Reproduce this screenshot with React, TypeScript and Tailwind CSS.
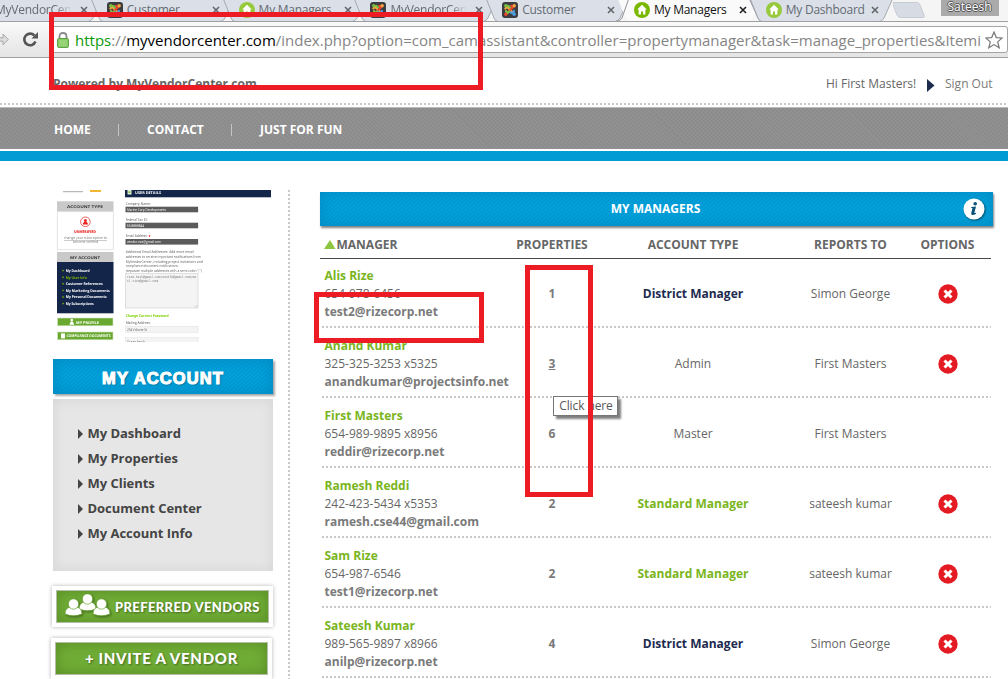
import React from "react";

function Joomla() {
  return (
    <svg width="16" height="16" viewBox="0 0 16 16" className="shrink-0">
      <rect width="16" height="16" rx="3" fill="#3b3d40" />
      <g fill="none" strokeWidth="2.2" strokeLinecap="round">
        <path d="M3.4 6.5 L5 4.8 L11 10.8" stroke="#f9a440" />
        <path d="M6.2 3.8 L8.2 5.6" stroke="#7ac143" />
        <path d="M9.2 3.8 L11.2 5 L5.2 11" stroke="#e8452f" />
        <path d="M4 9 L5 11.2 L7.5 9.4" stroke="#7ac143" />
        <path d="M8.6 10.4 L11 11.4 L12 9" stroke="#4a9be0" />
      </g>
      <circle cx="3.8" cy="3.8" r="1.7" fill="#7ac143" />
      <circle cx="12.2" cy="3.8" r="1.7" fill="#f9a440" />
      <circle cx="3.8" cy="12.2" r="1.7" fill="#e8452f" />
      <circle cx="12.2" cy="12.2" r="1.7" fill="#4a9be0" />
    </svg>
  );
}

function House({ color }: { color: string }) {
  return (
    <svg width="16" height="16" viewBox="0 0 16 16" className="shrink-0">
      <circle cx="8" cy="8" r="8" fill={color} />
      <path d="M8 2.8 L3.2 7.6 L4.6 7.6 L4.6 12.4 L7 12.4 L7 9.4 L9 9.4 L9 12.4 L11.4 12.4 L11.4 7.6 L12.8 7.6 Z" fill="#fff" />
    </svg>
  );
}

function CloseX({ color }: { color: string }) {
  return (
    <svg width="8" height="8" viewBox="0 0 8 8" className="shrink-0">
      <path d="M1 1 L7 7 M7 1 L1 7" stroke={color} strokeWidth="1.6" />
    </svg>
  );
}

type TabInfo = { title: string; icon: "joomla" | "house"; active?: boolean; fade?: boolean };

const tabs: TabInfo[] = [
  { title: "MyVendorCente", icon: "joomla", fade: true },
  { title: "Customer", icon: "joomla" },
  { title: "My Managers", icon: "house" },
  { title: "MyVendorCente", icon: "joomla", fade: true },
  { title: "Customer", icon: "joomla" },
  { title: "My Managers", icon: "house", active: true },
  { title: "My Dashboard", icon: "house" },
];

function Tab({ tab }: { tab: TabInfo }) {
  return (
    <div className="relative h-[22px] w-[131.8px] shrink-0">
      <svg className="absolute left-[-8px] top-0" width="148" height="22" viewBox="0 0 148 22">
        <path
          d="M2 -2 L10 18 Q11.5 21.5 14 21.5 L131 21.5 Q134 21.5 136 18 L145 -2 Z"
          fill={tab.active ? "#fafafa" : "#dbe0e8"}
          stroke={tab.active ? "#fafafa" : "#a3a8af"}
        />
        {tab.active && <path d="M-1 21.5 Q4 21.5 6 18 L13 -2 M133 -2 L142 18 Q143 21.5 147 21.5" fill="none" stroke="#8d9299" />}
      </svg>
      <div className="relative flex h-[20px] items-center pl-[10px]">
        {tab.icon === "joomla" ? <Joomla /> : <House color={tab.active ? "#7ab800" : "#97c93d"} />}
        <span className={`ml-1 w-[83px] overflow-hidden whitespace-nowrap text-[12px] leading-[20px] ${tab.active ? "tracking-[-0.25px] text-[#111]" : "tracking-[-0.25px] text-[#646b73]"}`}>
          <span className={tab.fade ? "block w-[80px] overflow-hidden [mask-image:linear-gradient(to_right,#000_75%,transparent_96%)]" : ""}>{tab.title}</span>
        </span>
        <span className="ml-[2px] flex"><CloseX color={tab.active ? "#222" : "#61666c"} /></span>
      </div>
    </div>
  );
}

function Browser() {
  return (
    <div>
      <div className="flex h-[22px] overflow-hidden border-b border-[#a0a0a0] bg-[#f5f5f6]">
        <div className="-ml-[35px] flex shrink-0">{tabs.map((t, i) => <Tab key={i} tab={t} />)}</div>
        <svg width="36" height="22" viewBox="0 0 36 22" className="ml-[5px] shrink-0">
          <path d="M-1 2.5 L24 2.5 Q26 2.5 27 5 L31 15 Q32 17.5 30 17.5 L8 17.5 Q5 17.5 4 15 L0 5 Q-1 2.5 1 2.5" fill="#d7dce4" stroke="#c7ccd4" />
        </svg>
        <div className="ml-[12px] h-[16px] w-[58px] shrink-0 bg-[#aaa] text-center text-[12px] leading-[13px] text-white [text-shadow:1px_0_#555,-1px_0_#555,0_1px_#555,0_-1px_#555]">Sateesh</div>
      </div>
      <div className="flex h-[36px] items-center border-b border-[#a0a0a0] bg-linear-to-b from-[#fafafa] to-[#e4e4e4]">
        <svg width="51" height="35" viewBox="0 0 51 35" className="shrink-0">
          <path d="M0 15.8 L3 15.8 L3 12.2 L8.3 17.5 L3 22.8 L3 19.2 L0 19.2" fill="#ddd" stroke="#a8a8a8" />
          <path d="M35.5 19.6 A5.8 5.8 0 1 1 34.4 13.5" fill="none" stroke="#555" strokeWidth="2.6" />
          <path d="M38 10 L38 16.5 L31.5 16.5 Z" fill="#555" />
        </svg>
        <div className="flex h-[27px] w-[957px] shrink-0 items-center rounded-[3px] border border-[#a5a5a5] bg-white pl-[5px]">
          <svg width="12" height="16" viewBox="0 0 12 16" className="shrink-0">
            <path d="M2.5 8 L2.5 4.5 Q2.5 1 6 1 Q9.5 1 9.5 4.5 L9.5 8" fill="none" stroke="#8a8a8a" strokeWidth="1.8" />
            <rect x=".6" y="6.6" width="10.8" height="8.8" rx="1" fill="#8ccf6c" stroke="#579b3b" />
            <path d="M2 9 H10 M2 11 H10 M2 13 H10" stroke="#a9df8e" strokeWidth=".7" />
          </svg>
          <div className="ml-[6px] w-[906px] overflow-hidden whitespace-nowrap text-[15px] leading-[24px] text-[#858585]">
            <span className="text-[#0b9a0b]">https</span>://<span className="text-black">myvendorcenter.com</span>/index.php?option=com_camassistant&amp;controller=propertymanager&amp;task=manage_properties&amp;Itemid
          </div>
          <svg width="18" height="18" viewBox="0 0 18 18" className="ml-[4px] shrink-0">
            <path d="M9 1 L11.3 6.6 L17.2 7 L12.7 10.9 L14.2 16.8 L9 13.6 L3.8 16.8 L5.3 10.9 L.8 7 L6.7 6.6 Z" fill="#fff" stroke="#777" strokeWidth="1.2" />
          </svg>
        </div>
      </div>
    </div>
  );
}

function SiteHeader() {
  return (
    <div>
      <div className="flex h-[45px] items-center pl-[53px] pt-[7px] text-[12px]">
        <span className="w-[773px] font-bold text-[#666]">Powered by MyVendorCenter.com</span>
        <span className="w-[101px] whitespace-nowrap text-[#666]">Hi First Masters!</span>
        <svg width="8" height="13" viewBox="0 0 8 13" className="mt-[2px]"><path d="M0 0 L7.5 6.5 L0 13 Z" fill="#1d2b4f" /></svg>
        <span className="ml-[10px] whitespace-nowrap text-[#7b7b7b]">Sign Out</span>
      </div>
      <div className="h-[2px] bg-[repeating-linear-gradient(90deg,#c9c9c9_0_2px,#fff_2px_4px)]" />
      <div className="h-[2px]" />
      <div className="flex h-[42px] items-center border-t border-[#b9b9b9] bg-[#8b8b8b] bg-[repeating-linear-gradient(45deg,rgba(255,255,255,0.06)_0_1.4px,transparent_1.4px_2.8px)] pl-[54px] pt-[2px] text-[12px] font-bold text-white">
        <span className="w-[64px] whitespace-nowrap">HOME</span>
        <span className="h-[12px] w-px bg-[#c5c5c5]" />
        <span className="ml-[28px] w-[84px] whitespace-nowrap">CONTACT</span>
        <span className="h-[12px] w-px bg-[#c5c5c5]" />
        <span className="ml-[28px] whitespace-nowrap">JUST FOR FUN</span>
      </div>
      <div className="mt-[2px] h-[10px] bg-[#039bd3]" />
    </div>
  );
}

const thumbMenu: [string, number][] = [
  ["My Dashboard", 24], ["My User Info", 21], ["Customer References", 37],
  ["My Marketing Documents", 44], ["My Personal Documents", 41], ["My Subscriptions", 28],
];
const thumbNotes: [string, number, number][] = [
  ["Additional Email Addresses: Add more email", 63.3, 68], ["addresses to receive important notifications from", 68, 75],
  ["MyVendorCenter, including project invitations and", 72.6, 77], ["compliance document notifications.", 77.3, 53],
  ['(separate multiple addresses with a semi-colon ";")', 82.3, 76],
];
const thumbFields: [string, string, number, number, number][] = [
  ["Company Name:", "Marine Corp Developments", 16.7, 25, 39],
  ["Federal Tax ID:", "65-8888844", 32.7, 22, 17],
  ["Email Address:", "vendor.rize@gmail.com", 49, 22, 34],
];

function Label(props: React.SVGProps<SVGTextElement>) {
  return <text lengthAdjust="spacingAndGlyphs" {...props} />;
}

function Thumbnail() {
  return (
    <svg width="220" height="152" viewBox="0 0 220 152" className="block overflow-hidden [filter:blur(0.25px)]" fontFamily="Open Sans, sans-serif" fontSize="3.8" textRendering="geometricPrecision">
      <rect x="10" y="1.2" width="20" height="1" fill="#aaa" />
      <rect x="37" y="0" width="11" height="2" fill="#f2b632" />
      <rect x="4" y="11.3" width="56.5" height="10.4" fill="#c9c9c9" />
      <rect x="4.3" y="21.7" width="56" height="38" fill="#fff" stroke="#ddd" strokeWidth=".8" />
      <Label x="14" y="18.2" fontWeight="700" fill="#333" textLength="36">ACCOUNT TYPE</Label>
      <circle cx="32.4" cy="31.8" r="4.8" fill="#fff" stroke="#f03a3a" strokeWidth=".8" />
      <circle cx="32.4" cy="30.4" r="1.5" fill="#e22" />
      <path d="M29.8 34.6 Q30 31.8 32.4 31.8 Q34.8 31.8 35 34.6 Z" fill="#e22" />
      <Label x="21" y="42.7" fontWeight="800" fill="#f03030" textLength="22">UNVERIFIED</Label>
      <Label x="11" y="49.3" fill="#777" textLength="43" textDecoration="underline">change your subscription to</Label>
      <Label x="20" y="53.3" fill="#777" textLength="25">become verified</Label>
      <rect x="4" y="62" width="56.5" height="10" fill="#c9c9c9" />
      <Label x="17" y="68.8" fontWeight="700" fill="#333" textLength="30">MY ACCOUNT</Label>
      <rect x="4" y="72" width="56.5" height="51.3" fill="#14254a" />
      {thumbMenu.map(([t, w], i) => (
        <g key={t} fontWeight="700">
          <path d={`M9.5 ${79.4 + i * 6.6} l1.8 1.2 l-1.8 1.2 z`} fill="#7ab800" />
          <Label x="12.7" y={82 + i * 6.6} fill={i === 1 ? "#7ab800" : "#fff"} textLength={w}>{t}</Label>
        </g>
      ))}
      <rect x="4.5" y="128" width="55.5" height="7.8" fill="#6aa92f" stroke="#d5e5c5" strokeWidth=".6" />
      <circle cx="18.8" cy="130" r="1.3" fill="#fff" />
      <path d="M16.6 134.8 Q17 131.3 18.8 131.3 Q20.6 131.3 21 134.8 Z" fill="#fff" />
      <Label x="23" y="133.5" fontWeight="700" fill="#fff" textLength="23">MY PROFILE</Label>
      <rect x="4.5" y="142" width="55.5" height="7.8" fill="#6aa92f" stroke="#d5e5c5" strokeWidth=".6" />
      <rect x="8" y="143.4" width="4" height="5" fill="#fff" />
      <Label x="13.5" y="147.3" fontWeight="700" fill="#fff" textLength="44">COMPLIANCE DOCUMENTS</Label>
      <rect x="72" y="0" width="146" height="7.3" fill="#14254a" />
      <rect x="74.5" y="0" width="4" height="4.5" fill="#e8f2dc" />
      <rect x="75.3" y="1.5" width="2.4" height="1.2" fill="#6aa92f" />
      <Label x="82" y="3.8" fontWeight="700" fill="#fff" textLength="26">USER DETAILS</Label>
      {thumbFields.map(([l, v, y, lw, vw]) => (
        <g key={l}>
          <Label x="72.7" y={y - 1.9} fill="#555" textLength={lw}>{l}</Label>
          <rect x="72.5" y={y} width="72.6" height="5.6" fill="#5b5b5b" />
          <Label x="74" y={y + 4.2} fill="#fff" textLength={vw}>{v}</Label>
        </g>
      ))}
      <Label x="95.5" y="48" fill="red" fontWeight="700">*</Label>
      {thumbNotes.map(([t, y, w]) => <Label key={t} x="72.7" y={y} fill="#606060" textLength={w}>{t}</Label>)}
      <rect x="72.5" y="83.6" width="72.5" height="34.4" fill="#f4f4f4" stroke="#ccc" strokeWidth=".6" />
      <g fontFamily="Liberation Mono, monospace" fill="#777" fontSize="3.6">
        <Label x="74" y="87.6" textLength="69">rize.test@gmail.com;mint70@gmail.com;ma</Label>
        <Label x="74" y="91.6" textLength="31">il.rize@gmail.com</Label>
      </g>
      <path d="M142 117.5 L144.5 115" stroke="#999" strokeWidth=".5" />
      <Label x="72.7" y="126.8" fontWeight="700" fill="#7fd000" textLength="43">Change Current Password</Label>
      <Label x="72.7" y="134.4" fill="#555" textLength="25">Mailing Address:</Label>
      <rect x="72.5" y="136.2" width="72.5" height="6" fill="#f4f4f4" stroke="#ddd" strokeWidth=".5" />
      <Label x="74" y="140.8" fill="#666" textLength="20">234 Voltaire St</Label>
      <rect x="72.5" y="147.7" width="72.5" height="6" fill="#f4f4f4" stroke="#ddd" strokeWidth=".5" />
      <Label x="74" y="152.5" fill="#666" textLength="18">Ocean beach</Label>
    </svg>
  );
}

function Person({ x, y }: { x: number; y: number }) {
  return (
    <g fill="#fff" stroke="#64a02b" strokeWidth=".7">
      <path d={`M${x - 8.5} ${y + 15} Q${x - 8.5} ${y + 9} ${x - 3} ${y + 8} L${x + 3} ${y + 8} Q${x + 8.5} ${y + 9} ${x + 8.5} ${y + 15} Q${x} ${y + 18.5} ${x - 8.5} ${y + 15} Z`} />
      <circle cx={x} cy={y + 5} r="5.2" />
    </g>
  );
}

function Sidebar() {
  const items = ["My Dashboard", "My Properties", "My Clients", "Document Center", "My Account Info"];
  return (
    <div className="w-[220px] shrink-0">
      <Thumbnail />
      <div className="mt-[17px] flex h-[35px] items-center justify-center bg-[#02a0da] bg-[repeating-linear-gradient(135deg,rgba(0,60,100,0.10)_0_1px,transparent_1px_2.83px)] pt-[4px] font-['Liberation_Sans',sans-serif] text-[16.5px] font-bold shadow-[2px_2px_2px_rgba(0,0,0,0.35),inset_0_0_14px_rgba(0,60,110,0.22)]">
        <span className="tracking-[1.1px] text-white [-webkit-text-stroke:1.1px_white] [text-shadow:1px_1px_2px_rgba(0,0,0,0.35)]">MY ACCOUNT</span>
      </div>
      <ul className="mt-[5px] h-[172px] bg-[#e6e6e6] pl-[25px] pt-[22px] shadow-[inset_0_0_14px_rgba(0,0,0,0.08)]">
        {items.map((t) => (
          <li key={t} className="flex h-[25px] items-center text-[13px] font-bold tracking-[-0.03px] text-[#444]">
            <svg width="10" height="10" viewBox="0 0 10 10" className="mr-[-0.5px]"><path d="M0 0 L5 5 L0 10 Z" fill="#444" /></svg>
            <span>{t}</span>
          </li>
        ))}
      </ul>
      <div className="mt-[15px] -ml-px h-[41px] w-[221px] bg-white p-[4px] shadow-[0_0_4px_rgba(0,0,0,0.3)]">
        <div className="flex h-[33px] items-center border border-[#b4bda8] bg-[#70ad36] pl-[8px] shadow-[inset_0_0_14px_rgba(50,90,10,0.4)]">
          <svg width="46" height="24" viewBox="0 0 46 24" className="-mt-px shrink-0 drop-shadow-[1px_1px_1px_rgba(0,0,0,0.4)]">
            <Person x={22.5} y={0} /><Person x={8.5} y={5} /><Person x={36.5} y={5} />
          </svg>
          <span className="ml-[4px] mt-[2px] whitespace-nowrap font-['Lato',sans-serif] text-[13px] font-black tracking-[0.38px] text-white [text-shadow:1px_1px_2px_rgba(0,0,0,0.4)]">PREFERRED VENDORS</span>
        </div>
      </div>
      <div className="mt-[11px] -ml-[2px] h-[41px] w-[221px] bg-white p-[4px] shadow-[0_0_4px_rgba(0,0,0,0.3)]">
        <div className="flex h-[33px] items-center justify-center border border-[#b4bda8] bg-[#70ad36] shadow-[inset_0_0_14px_rgba(50,90,10,0.4)]">
          <span className="whitespace-nowrap font-['Lato',sans-serif] text-[15px] font-black tracking-[0.7px] text-white [text-shadow:1px_1px_2px_rgba(0,0,0,0.4)]">+ INVITE A VENDOR</span>
        </div>
      </div>
    </div>
  );
}

type Manager = { name: string; phone: string; email: string; count: number; type: string; to: string };
const managers: Manager[] = [
  { name: "Alis Rize", phone: "654-978-6456", email: "test2@rizecorp.net", count: 1, type: "District Manager", to: "Simon George" },
  { name: "Anand Kumar", phone: "325-325-3253 x5325", email: "anandkumar@projectsinfo.net", count: 3, type: "Admin", to: "First Masters" },
  { name: "First Masters", phone: "654-989-9895 x8956", email: "reddir@rizecorp.net", count: 6, type: "Master", to: "First Masters" },
  { name: "Ramesh Reddi", phone: "242-423-5434 x5353", email: "ramesh.cse44@gmail.com", count: 2, type: "Standard Manager", to: "sateesh kumar" },
  { name: "Sam Rize", phone: "654-987-6546", email: "test1@rizecorp.net", count: 2, type: "Standard Manager", to: "sateesh kumar" },
  { name: "Sateesh Kumar", phone: "989-565-9897 x8966", email: "anilp@rizecorp.net", count: 4, type: "District Manager", to: "Simon George" },
];

const typeStyle: Record<string, string> = {
  "District Manager": "pt-[2px] font-bold text-[#1d2b4f]",
  "Standard Manager": "pt-[2px] font-bold text-[#7ab51d]",
  Admin: "pt-[2px]",
  Master: "pt-[2px]",
};

function Managers() {
  return (
    <div className="w-[673px] shrink-0 pt-[2px] text-[12px]">
      <div className="relative flex h-[34px] items-center justify-center bg-[#02a0da] bg-[repeating-linear-gradient(135deg,rgba(0,60,100,0.10)_0_1px,transparent_1px_2.83px)] font-bold text-white shadow-[1px_2px_2px_rgba(0,0,0,0.5),inset_0_0_14px_rgba(0,60,110,0.2)]">
        <span className="pr-[2px]">MY MANAGERS</span>
        <svg width="24" height="24" viewBox="0 0 24 24" className="absolute right-[7px] top-[5px] drop-shadow-[1px_1px_1px_rgba(0,0,0,0.5)]">
          <circle cx="12" cy="12" r="10.5" fill="#fff" />
          <circle cx="13.2" cy="6.7" r="1.8" fill="#0a5377" />
          <path d="M9.3 10 L14 9.5 L12.4 15.7 Q12.3 16.6 14.2 15.4 L14 16.7 Q12 18.2 10.2 18 Q8.8 17.7 9.3 15.8 L10.5 11.2 L9.2 11 Z" fill="#0a5377" />
        </svg>
      </div>
      <div className="grid h-[33px] w-[671px] grid-cols-[164px_136px_146px_168px_57px] items-center border-b border-[#4a4a4a] pt-[5px] text-center font-bold text-[#666]">
        <div className="flex items-center pl-[4px]">
          <svg width="12" height="9" viewBox="0 0 12 9"><path d="M6 0 L11.5 9 L0 9 Z" fill="#8cc63f" /></svg>
          <span className="pl-[0.5px]">MANAGER</span>
        </div>
        <span>PROPERTIES</span>
        <span>ACCOUNT TYPE</span>
        <span className="pl-px">REPORTS TO</span>
        <span className="-ml-[30px]">OPTIONS</span>
      </div>
      {managers.map((m) => (
        <div key={m.name} className="w-[671px]">
          <div className="grid h-[68px] grid-cols-[164px_136px_146px_168px_57px] items-center text-center text-[12px] leading-[18px] text-[#666]">
            <div className="whitespace-nowrap pl-[4.5px] pt-[2px] text-left">
              <div className="font-bold text-[#7ab51d]">{m.name}</div>
              <div>{m.phone}</div>
              <div className="font-bold text-[#7a7a7a]">{m.email}</div>
            </div>
            <span className={m.count === 3 ? "pt-[2px] font-bold text-[#7a7a7a] underline" : "pt-[2px] font-bold text-[#7a7a7a]"}>{m.count}</span>
            <span className={typeStyle[m.type]}>{m.type}</span>
            <span className="pl-px pt-[2px]">{m.to}</span>
            <span className="-ml-[30px] flex justify-center pt-[2px]">
              {m.name !== "First Masters" && (
                <svg width="20" height="20" viewBox="0 0 20 20">
                  <circle cx="10" cy="10" r="9.7" fill="#e51b24" />
                  <path d="M6.5 6.5 L13.5 13.5 M13.5 6.5 L6.5 13.5" stroke="#fff" strokeWidth="3" />
                </svg>
              )}
            </span>
          </div>
          <div className="-mt-px mb-px ml-[2px] h-[2px] bg-[repeating-linear-gradient(90deg,#c8c8c8_0_2px,#fff_2px_4px)]" />
        </div>
      ))}
    </div>
  );
}

export default function App() {
  return (
    <div className="relative h-[679px] w-[1008px] overflow-hidden bg-white font-['Open_Sans',sans-serif]">
      <Browser />
      <SiteHeader />
      <div className="flex pl-[53px] pt-[29px]">
        <Sidebar />
        <div className="ml-[15px] mr-[30px] h-[489px] w-[2px] shrink-0 bg-[repeating-linear-gradient(180deg,#c8c8c8_0_2px,#fff_2px_4px)]" />
        <Managers />
      </div>
      <div className="absolute left-[553px] top-[396px] h-[20px] w-[65px] border border-[#767676] bg-white pl-px text-center text-[12px] leading-[18px] tracking-[-0.1px] text-[#575757] shadow-[3px_3px_2px_rgba(0,0,0,0.5)]">Click here</div>
      <div className="absolute left-[49px] top-[12px] h-[78px] w-[434px] border-5 border-[#ed1c24]" />
      <div className="absolute left-[314px] top-[292px] h-[51px] w-[170px] border-5 border-[#ed1c24]" />
      <div className="absolute left-[525px] top-[265px] h-[232px] w-[68px] border-5 border-[#ed1c24]" />
    </div>
  );
}
